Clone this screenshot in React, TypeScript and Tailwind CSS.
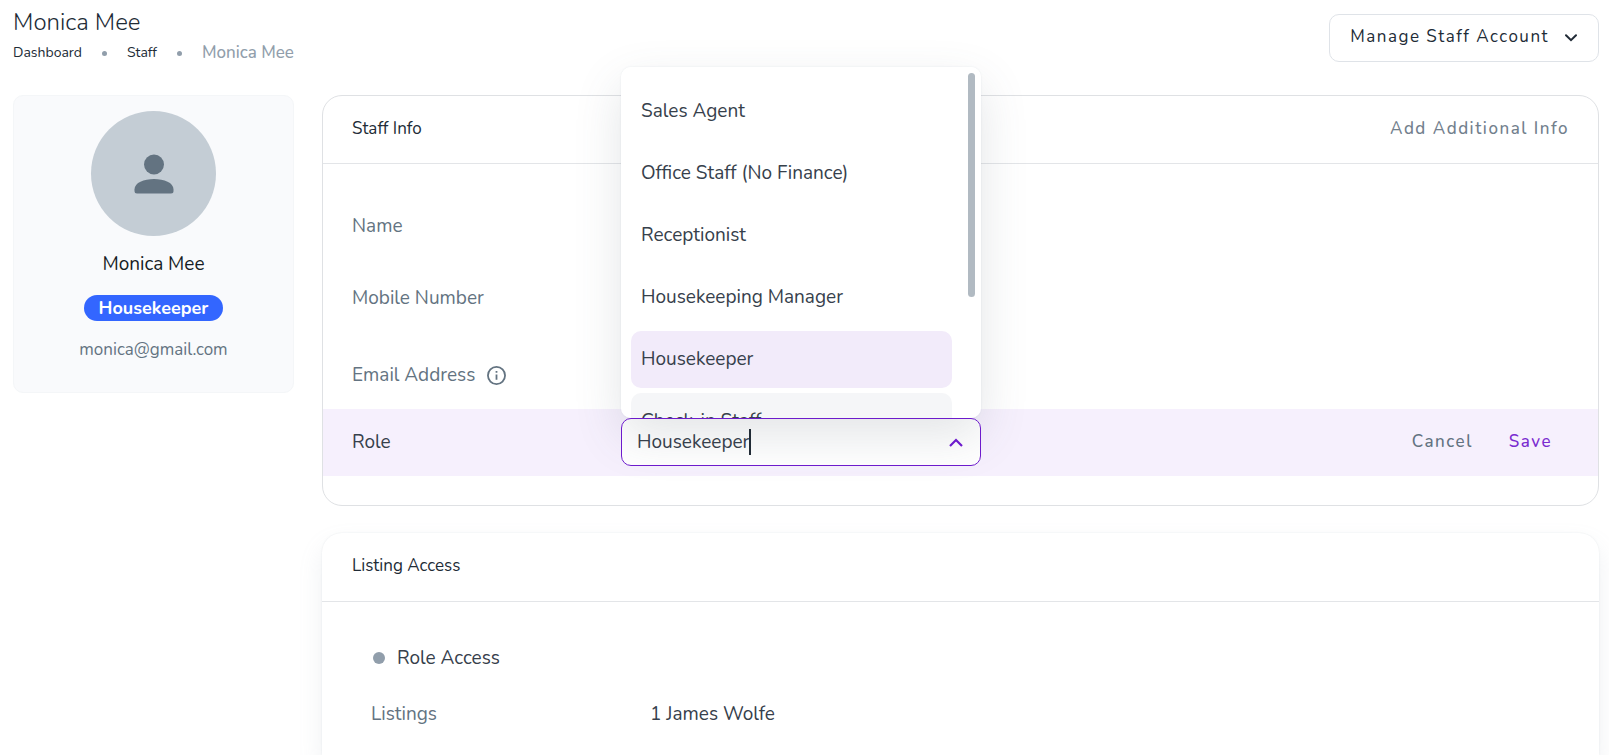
import React, { useState } from "react";

const roles = [
  "Sales Agent",
  "Office Staff (No Finance)",
  "Receptionist",
  "Housekeeping Manager",
  "Housekeeper",
  "Check-in Staff",
];

const Header: React.FC = () => (
  <header className="flex items-start justify-between">
    <div>
      <h1 className="text-[24px] leading-8 pt-1.5 font-light">Monica Mee</h1>
      <nav aria-label="Breadcrumb" className="flex items-center leading-6 mt-[3px]">
        <a href="#dashboard" className="text-[14px]">
          Dashboard
        </a>
        <span className="size-[5px] rounded-full bg-[#919eab] mx-5" />
        <a href="#staff" className="text-[14px]">
          Staff
        </a>
        <span className="size-[5px] rounded-full bg-[#919eab] mx-5" />
        <span className="text-[17px] font-medium text-[#919eab]">Monica Mee</span>
      </nav>
    </div>
    <button
      type="button"
      className="mt-[14px] flex h-12 items-center gap-4 rounded-[10px] border border-[#dfe3e8] bg-white pl-5 pr-[21px] text-[17px] tracking-[1.5px]"
    >
      <span className="pb-0.5">Manage Staff Account</span>
      <svg width="12" height="8" viewBox="0 0 12 8" fill="none" stroke="#212b36" strokeWidth="2">
        <path d="M1 1.2 6 6.2 11 1.2" strokeLinecap="round" />
      </svg>
    </button>
  </header>
);

const ProfileCard: React.FC = () => (
  <aside className="flex h-[298px] flex-col items-center rounded-[10px] border border-[#f4f6f8] bg-[#f9fafc] pt-[15px]">
    <div className="flex size-[125px] items-center justify-center rounded-full bg-[#c4cdd5]">
      <svg width="40" height="40" viewBox="0 0 40 40" fill="#637381">
        <circle cx="20" cy="10.5" r="10" />
        <path d="M.5 35.500C.5 28.500 10 25 20 25s19.500 3.500 19.500 10.500V37q0 2.500-2.500 2.500H3Q.5 39.500.5 37Z" />
      </svg>
    </div>
    <h2 className="mt-3 text-[19px] leading-8 text-[#161c24]">Monica Mee</h2>
    <span className="mt-[15px] rounded-full bg-[#3366ff] px-[15px] pt-px text-[18px] leading-[25px] font-bold text-white">
      Housekeeper
    </span>
    <p className="mt-[17px] text-[17px] leading-6 text-[#637381]">monica@gmail.com</p>
  </aside>
);

const RoleSelect: React.FC = () => {
  const [role, setRole] = useState("Housekeeper");

  return (
    <div className="relative w-[360px] rounded-[10px] bg-white">
      <div className="pointer-events-none absolute inset-x-0 bottom-full h-[351px] rounded-[10px] shadow-[0_0_2px_rgba(145,158,171,0.2),0_18px_48px_rgba(80,95,105,0.16)]" />
      <div className="relative flex h-12 items-center rounded-[10px] border border-[#6d1bcc] pl-[15px] pr-[17px]">
        <input
          id="role"
          role="combobox"
          aria-expanded="true"
          aria-controls="role-options"
          value={role}
          onChange={(e) => setRole(e.target.value)}
          className="min-w-0 [field-sizing:content] text-[19px] text-[#36404b] outline-none"
        />
        <span className="h-[26px] w-0.5 bg-[#212b36]" />
        <svg className="ml-auto" width="14" height="9" viewBox="0 0 14 9" fill="none" stroke="#6d1bcc" strokeWidth="2.2">
          <path d="M1 8 7 2l6 6" />
        </svg>
      </div>
      <div className="absolute inset-x-0 bottom-full z-10 flex h-[351px] overflow-hidden rounded-[10px] bg-white">
        <ul id="role-options" role="listbox" className="flex flex-1 flex-col gap-[5px] pl-[10px] pt-4">
          {roles.map((item) => (
            <li
              key={item}
              role="option"
              aria-selected={item === role}
              onClick={() => setRole(item)}
              className={
                "flex h-[57px] shrink-0 items-center rounded-[10px] px-[10px] text-[19px] text-[#36404b] " +
                (item === role ? "bg-[#f2ebfa]" : item === "Check-in Staff" ? "bg-[#f5f6f8]" : "")
              }
            >
              {item}
            </li>
          ))}
        </ul>
        <span className="ml-4 mr-[6px] mt-[6px] h-[224px] w-[7px] rounded-full bg-[#b1bac2]" />
      </div>
    </div>
  );
};

const StaffInfo: React.FC = () => (
  <section className="rounded-[20px] border border-[#dfe1e4] pb-[29px]">
    <div className="flex h-[68px] items-center justify-between border-b border-[#e3e5e8] px-[29px] pb-0.5">
      <h2 className="text-[17px]">Staff Info</h2>
      <button type="button" className="text-[17px] font-medium tracking-[1.5px] text-[#72808d]">
        Add Additional Info
      </button>
    </div>
    <dl className="flex flex-col px-[29px] pt-6 text-[19px] text-[#637381]">
      <dt className="flex h-[76px] items-center">Name</dt>
      <dt className="flex h-[68px] items-center">Mobile Number</dt>
      <dt className="flex h-[77px] items-center gap-3 pt-2.5">
        Email Address
        <svg width="19" height="19" viewBox="0 0 18 18" fill="none" stroke="#637381" strokeWidth="1.7">
          <circle cx="9" cy="9" r="8.100" />
          <path d="M9 8v5M9 4.700v1.800" />
        </svg>
      </dt>
    </dl>
    <div className="flex items-center bg-[#f6f0fd] pt-[9px] pb-[10px] pl-[29px] pr-[46px]">
      <label htmlFor="role" className="w-[269px] text-[19px] text-[#36404b]">
        Role
      </label>
      <RoleSelect />
      <div className="ml-auto flex gap-9 text-[17px] font-medium tracking-[1.5px]">
        <button type="button" className="text-[#637381]">
          Cancel
        </button>
        <button type="button" className="text-[#7a2bd0]">
          Save
        </button>
      </div>
    </div>
  </section>
);

const ListingAccess: React.FC = () => (
  <section className="mt-[27px] flex-1 rounded-t-[20px] bg-white shadow-[0_0_2px_rgba(145,158,171,0.2),0_12px_24px_rgba(145,158,171,0.14)]">
    <div className="flex h-[69px] items-center border-b border-[#e3e5e8] px-[30px] pb-0.5">
      <h2 className="text-[17px]">Listing Access</h2>
    </div>
    <div className="pl-[49px] pt-10 text-[19px] text-[#36404b]">
      <div className="flex h-8 items-center gap-3 pl-0.5">
        <span className="size-3 rounded-full bg-[#919eab]" />
        Role Access
      </div>
      <dl className="mt-6 flex h-8 items-center">
        <dt className="w-[279px] text-[#637381]">Listings</dt>
        <dd>1 James Wolfe</dd>
      </dl>
    </div>
  </section>
);

const App: React.FC = () => {
  return (
    <div className="flex min-h-screen flex-col bg-white pl-[13px] pr-[10px] font-['Nunito','Lato',sans-serif] text-[#212b36]">
      <Header />
      <main className="mt-[30px] grid flex-1 grid-cols-[281px_1fr] items-start gap-7">
        <ProfileCard />
        <div className="flex flex-col self-stretch">
          <StaffInfo />
          <ListingAccess />
        </div>
      </main>
    </div>
  );
};

export default App;
